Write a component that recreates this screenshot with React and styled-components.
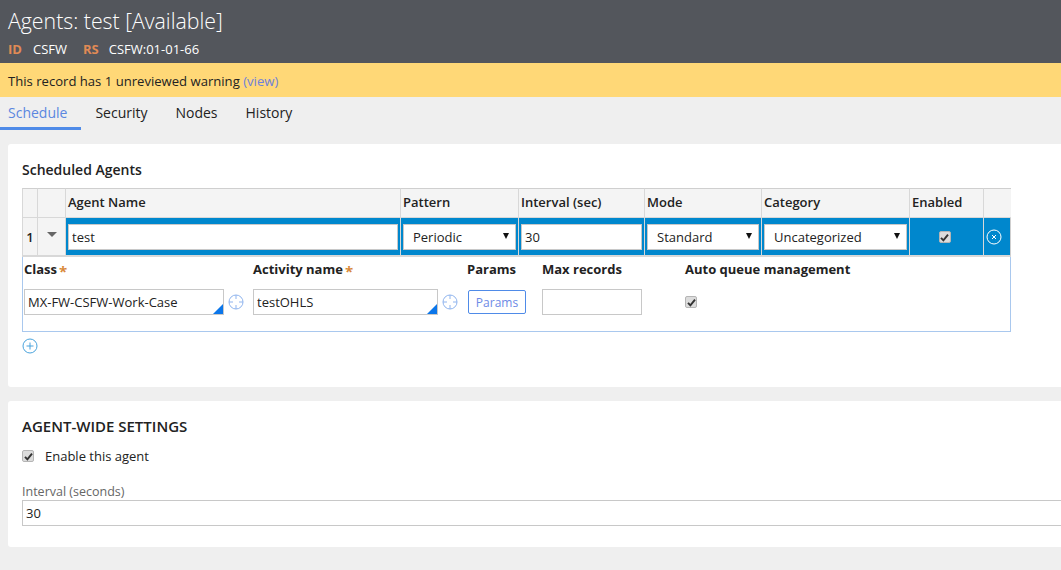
import React from 'react';
import styled, { createGlobalStyle } from 'styled-components';

const GlobalStyle = createGlobalStyle`
  html, body { margin: 0; padding: 0; height: 100%; overflow: hidden; }
  body {
    background: #efefef;
    font-family: "Open Sans", "Liberation Sans", sans-serif;
    font-size: 13px;
    color: #222;
  }
  * { box-sizing: border-box; }
`;

const Page = styled.div`
  width: 1061px;
  height: 570px;
  overflow: hidden;
`;

const Header = styled.div`
  height: 63px;
  background: #53565c;
  color: #fff;
  padding: 6px 8px 0;
`;

const Title = styled.div`
  font-size: 21.3px;
  font-weight: 300;
  line-height: 30px;
`;

const Meta = styled.div`
  display: flex;
  align-items: center;
  margin-top: 4px;
  font-size: 13px;
  line-height: 18px;
`;

const MetaKey = styled.span`
  color: #e08a55;
  font-weight: 700;
  margin-right: ${(p) => p.$gap}px;
`;

const MetaValue = styled.span`
  margin-right: ${(p) => p.$gap}px;
`;

const Warning = styled.div`
  height: 34px;
  background: #ffd877;
  padding: 0 8px;
  font-size: 13.1px;
  line-height: 36px;
  color: #222;
`;

const ViewLink = styled.span`
  color: #6d80dc;
`;

const Tabs = styled.div`
  height: 33px;
  display: flex;
`;

const Tab = styled.div`
  padding: 0 14px 0 ${(p) => (p.$first ? 8 : 14)}px;
  font-size: 14px;
  line-height: 32px;
  color: ${(p) => (p.$active ? '#5b87e0' : '#222')};
  border-bottom: ${(p) => (p.$active ? '3px solid #4f8be8' : 'none')};
  height: 33px;
`;

const Panel = styled.div`
  margin: ${(p) => p.$top}px 0 0 8px;
  height: ${(p) => p.$height}px;
  background: #fff;
  border-radius: 3px 0 0 3px;
  padding: ${(p) => p.$pad}px 0 0 14px;
`;

const SectionTitle = styled.div`
  font-size: ${(p) => p.$size || 14}px;
  font-weight: 600;
  line-height: 20px;
  color: #222;
`;

const Grid = styled.div`
  display: grid;
  grid-template-columns: 15px 28px 335px 118px 126px 117px 148px 74px 28px;
  width: 989px;
  margin-top: 8px;
`;

const HeadCell = styled.div`
  height: 30px;
  background: #f4f4f4;
  border-top: 1px solid #cfcfcf;
  border-bottom: 1px solid #d8d8d8;
  border-left: 1px solid #d8d8d8;
  padding-left: 2px;
  font-weight: 600;
  font-size: 13px;
  line-height: 26px;
  &:last-child { border-right: 1px solid #cfcfcf; }
`;

const PlainCell = styled.div`
  height: 39px;
  background: #f4f4f4;
  border-left: 1px solid #d8d8d8;
  border-bottom: 2px solid #d8d8d8;
  display: flex;
  align-items: center;
  justify-content: center;
  font-weight: 600;
  font-size: 13px;
`;

const BlueCell = styled.div`
  height: 39px;
  background: #0087cd;
  border-left: 1px solid #d8d8d8;
  border-bottom: 2px solid #d8d8d8;
  padding: 6px ${(p) => p.$right ?? 2}px 5px 2px;
  display: flex;
  align-items: center;
  justify-content: ${(p) => p.$justify || 'center'};
  &:last-child { border-right: 1px solid #cfcfcf; }
`;

const Caret = styled.span`
  width: 0;
  height: 0;
  border-left: 5px solid transparent;
  border-right: 5px solid transparent;
  border-top: 5px solid #666;
  margin-top: -4px;
`;

const TextBox = styled.input`
  display: block;
  width: ${(p) => p.$width || '100%'};
  height: 26px;
  border: 1px solid #c8c8c8;
  background: #fff;
  padding: 0 3px;
  font: inherit;
  color: #222;
  outline: none;
  border-radius: 0;
`;

const Select = styled.div`
  width: 100%;
  height: 26px;
  background: #fff;
  border: 1px solid #c8c8c8;
  display: flex;
  align-items: center;
  justify-content: space-between;
  padding: 0 6px 0 9px;
`;

const SelectArrow = styled.span`
  width: 0;
  height: 0;
  border-left: 3.5px solid transparent;
  border-right: 3.5px solid transparent;
  border-top: 6px solid #111;
  margin-top: -2px;
`;

const Check = styled.span`
  width: 12px;
  height: 12px;
  border-radius: 2px;
  background: #dcdcdc;
  border: 1px solid #b5b5b5;
  display: flex;
  align-items: center;
  justify-content: center;
  flex: none;
`;

const Detail = styled.div`
  width: 989px;
  height: 75px;
  border: 1px solid #a9c8ee;
  border-top: none;
  padding: 2px 0 0 1px;
  display: grid;
  grid-template-columns: 229px 214px 75px 143px 1fr;
  grid-template-rows: 20px 1fr;
`;

const Label = styled.div`
  font-weight: 700;
  font-size: 13px;
  line-height: 20px;
  color: #222;
`;

const Star = styled.span`
  color: #d9893a;
  font-size: 15px;
  line-height: 15px;
  margin-left: 2px;
  vertical-align: -3px;
`;

const FieldCell = styled.div`
  display: flex;
  align-items: center;
  gap: 4px;
  padding-top: 10px;
  height: 36px;
`;

const SmartWrap = styled.div`
  position: relative;
  width: ${(p) => p.$width}px;
`;

const Corner = styled.span`
  position: absolute;
  right: 1px;
  bottom: 1px;
  width: 0;
  height: 0;
  border-left: 10px solid transparent;
  border-bottom: 10px solid #0b76ea;
`;

const ParamsButton = styled.div`
  width: 58px;
  height: 24px;
  margin-left: 1px;
  border: 1px solid #4f8be8;
  border-radius: 2px;
  color: #6d8ae6;
  font-size: 12px;
  display: flex;
  align-items: center;
  justify-content: center;
`;

const AddRow = styled.div`
  height: 16px;
  margin-top: 6px;
`;

const CheckRow = styled.div`
  display: flex;
  align-items: center;
  gap: 11px;
  margin-top: 11px;
  height: 18px;
`;

const CaptionLabel = styled.div`
  margin-top: 19px;
  font-size: 12.5px;
  line-height: 16px;
  color: #666;
`;

const CheckMark = () => (
  <svg width="9" height="9" viewBox="0 0 9 9">
    <path d="M1 4.8 L3.4 7.4 L8 1.6" fill="none" stroke="#333" strokeWidth="1.9" />
  </svg>
);

const TargetIcon = () => (
  <svg width="16" height="16" viewBox="0 0 16 16" fill="none" stroke="#8fb4ee" strokeWidth="1">
    <circle cx="8" cy="8" r="7" />
    <path d="M8 1v4M8 11v4M1 8h4M11 8h4" />
  </svg>
);

const PlusIcon = () => (
  <svg width="16" height="16" viewBox="0 0 16 16" fill="none" stroke="#4aa3dc" strokeWidth="1">
    <circle cx="8" cy="8" r="7" />
    <path d="M8 4.5v7M4.5 8h7" />
  </svg>
);

const RemoveIcon = () => (
  <svg width="16" height="16" viewBox="0 0 16 16" fill="none" stroke="#fff" strokeWidth="1">
    <circle cx="8" cy="8" r="7" />
    <path d="M6 6l4 4M10 6l-4 4" />
  </svg>
);

const columns = ['', '', 'Agent Name', 'Pattern', 'Interval (sec)', 'Mode', 'Category', 'Enabled', ''];

export default function App() {
  return (
    <Page>
      <GlobalStyle />
      <Header>
        <Title>Agents: test [Available]</Title>
        <Meta>
          <MetaKey $gap={11}>ID</MetaKey>
          <MetaValue $gap={16}>CSFW</MetaValue>
          <MetaKey $gap={10}>RS</MetaKey>
          <MetaValue $gap={0}>CSFW:01-01-66</MetaValue>
        </Meta>
      </Header>
      <Warning>
        This record has 1 unreviewed warning <ViewLink>(view)</ViewLink>
      </Warning>
      <Tabs>
        <Tab $first $active>Schedule</Tab>
        <Tab>Security</Tab>
        <Tab>Nodes</Tab>
        <Tab>History</Tab>
      </Tabs>

      <Panel $top={14} $height={243} $pad={16}>
        <SectionTitle>Scheduled Agents</SectionTitle>
        <Grid>
          {columns.map((c, i) => (
            <HeadCell key={i}>{c}</HeadCell>
          ))}
          <PlainCell>1</PlainCell>
          <PlainCell><Caret /></PlainCell>
          <BlueCell><TextBox readOnly value="test" /></BlueCell>
          <BlueCell><Select>Periodic<SelectArrow /></Select></BlueCell>
          <BlueCell><TextBox readOnly value="30" /></BlueCell>
          <BlueCell><Select>Standard<SelectArrow /></Select></BlueCell>
          <BlueCell><Select>Uncategorized<SelectArrow /></Select></BlueCell>
          <BlueCell $right={6}><Check><CheckMark /></Check></BlueCell>
          <BlueCell $justify="flex-start"><RemoveIcon /></BlueCell>
        </Grid>
        <Detail>
          <Label>Class<Star>*</Star></Label>
          <Label>Activity name<Star>*</Star></Label>
          <Label>Params</Label>
          <Label>Max records</Label>
          <Label>Auto queue management</Label>
          <FieldCell>
            <SmartWrap $width={200}>
              <TextBox readOnly value="MX-FW-CSFW-Work-Case" />
              <Corner />
            </SmartWrap>
            <TargetIcon />
          </FieldCell>
          <FieldCell>
            <SmartWrap $width={185}>
              <TextBox readOnly value="testOHLS" />
              <Corner />
            </SmartWrap>
            <TargetIcon />
          </FieldCell>
          <FieldCell><ParamsButton>Params</ParamsButton></FieldCell>
          <FieldCell><TextBox readOnly value="" $width="100px" /></FieldCell>
          <FieldCell><Check><CheckMark /></Check></FieldCell>
        </Detail>
        <AddRow><PlusIcon /></AddRow>
      </Panel>

      <Panel $top={14} $height={146} $pad={15}>
        <SectionTitle $size={15}>AGENT-WIDE SETTINGS</SectionTitle>
        <CheckRow>
          <Check><CheckMark /></Check>
          Enable this agent
        </CheckRow>
        <CaptionLabel>Interval (seconds)</CaptionLabel>
        <TextBox readOnly value="30" $width="1060px" />
      </Panel>
    </Page>
  );
}
